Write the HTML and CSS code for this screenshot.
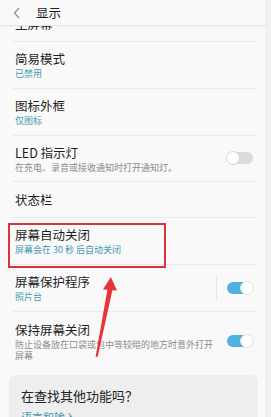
FILE: index.html
```html
<!DOCTYPE html>
<html lang="zh">
<head>
<meta charset="utf-8">
<link rel="stylesheet" href="styles.css">
</head>
<body>
<div class="page">
  <div class="main">
    <div class="header">
      <svg class="back" width="10" height="12" viewBox="0 0 10 12"><path d="M7 1 L2.5 6 L7 11" fill="none" stroke="#8b9aa3" stroke-width="1.4"/></svg>
      <span class="title">显示</span>
    </div>
    <div class="list">
      <div class="row single first"><div class="text"><div class="t">主屏幕</div></div></div>
      <div class="row"><div class="text"><div class="t">简易模式</div><div class="s teal">已禁用</div></div></div>
      <div class="row"><div class="text"><div class="t">图标外框</div><div class="s teal">仅图标</div></div></div>
      <div class="row led"><div class="text"><div class="t">LED 指示灯</div><div class="s">在充电、录音或接收通知时打开通知灯。</div></div><div class="toggle off"><span class="knob"></span></div></div>
      <div class="row single"><div class="text"><div class="t">状态栏</div></div></div>
      <div class="row"><div class="text"><div class="t">屏幕自动关闭</div><div class="s teal">屏幕会在 30 秒 后自动关闭</div></div></div>
      <div class="row"><div class="text"><div class="t">屏幕保护程序</div><div class="s teal">照片台</div></div><span class="vsep"></span><div class="toggle on"><span class="knob"></span></div></div>
      <div class="row tall"><div class="text"><div class="t">保持屏幕关闭</div><div class="s">防止设备放在口袋或包中等较暗的地方时意外打开屏幕</div></div><div class="toggle on"><span class="knob"></span></div></div>
      <div class="card">
        <div class="card-title">在查找其他功能吗？</div>
        <div class="card-link">语言和输入</div>
      </div>
    </div>
  </div>
  <div class="strip"></div>
  <div class="redbox"></div>
  <svg class="arrow" width="271" height="417" viewBox="0 0 271 417">
    <path d="M110.8 277 L117 290.5 L112.4 290.2 L97.6 357 L95.6 356.6 L107.4 289.8 L103 289.6 Z" fill="#e5353b"/>
  </svg>
</div>
</body>
</html>
```
FILE: styles.css
```css
* { box-sizing: border-box; }
html, body { margin: 0; padding: 0; }
body {
  width: 271px;
  height: 417px;
  overflow: hidden;
  background: #f9f9f9;
  font-family: "Noto Sans CJK SC", "Noto Sans", sans-serif;
  color: #222;
}
.page {
  position: relative;
  display: flex;
  width: 271px;
  height: 417px;
}
.main {
  width: 266px;
  display: flex;
  flex-direction: column;
}
.strip {
  width: 5px;
  background: #f3f3f3;
  border-left: 1px solid #e9e9e9;
  border-right: 1px solid #ececec;
}
.header {
  height: 26px;
  flex: none;
  display: flex;
  align-items: center;
  padding-left: 12px;
  border-bottom: 1px solid #e8e8e8;
  box-shadow: 0 1px 1px rgba(0,0,0,0.03);
}
.back { margin-right: 14px; margin-top: 1px; }
.title { font-size: 12.5px; line-height: 18px; color: #1e1e1e; }
.list {
  flex: 1;
  overflow: hidden;
  display: flex;
  flex-direction: column;
}
.row {
  flex: none;
  height: 47px;
  margin: 0 10px 0 13px;
  padding: 0 0 1px 2px;
  border-bottom: 1px solid #e9e9e9;
  display: flex;
  align-items: center;
}
.row.single { height: 36px; padding-top: 2px; }
.row.led { height: 46px; }
.row.tall { height: 58px; border-bottom: none; }
.row.first { margin-top: -20px; }
.text { flex: 1; min-width: 0; padding-right: 10px; }
.t { font-size: 12.5px; line-height: 18px; color: #1f1f1f; white-space: nowrap; }
.s { font-size: 9px; line-height: 11px; color: #8c8c8c; }
.s.teal { color: #4598b2; }
.vsep {
  width: 1px;
  height: 22px;
  background: #e4e4e4;
  margin-right: 10px;
}
.toggle {
  width: 26px;
  height: 12px;
  border-radius: 6px;
  display: flex;
  align-items: center;
  margin-right: 3px;
  flex: none;
}
.toggle.off { background: #dcdcdc; justify-content: flex-start; }
.toggle.on { background: #4eb2dd; justify-content: flex-end; }
.knob {
  width: 14px;
  height: 14px;
  border-radius: 50%;
  background: #fff;
  border: 1px solid #d6d6d6;
  margin: 0 -1px;
}
.toggle.on .knob { border-color: #e2e2e2; }
.card {
  margin: 5px 8px 0 9px;
  padding: 12px 12px 0 12px;
  background: #eeeeee;
  border-radius: 6px;
  height: 60px;
  flex: none;
}
.card-title { font-size: 13px; line-height: 18px; color: #222; }
.card-link { font-size: 11px; line-height: 14px; color: #4598b2; margin-top: 5px; }
.redbox {
  position: absolute;
  left: 8px;
  top: 223px;
  width: 158px;
  height: 45px;
  border: 2px solid #d7353b;
}
.arrow { position: absolute; left: 0; top: 0; }
```
